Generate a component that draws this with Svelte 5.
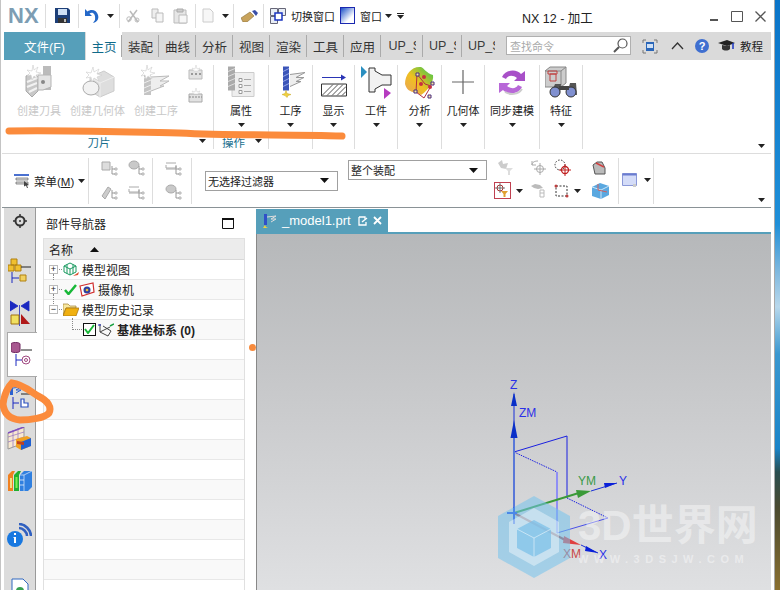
<script>
  const tabs = ["装配", "曲线", "分析", "视图", "渲染", "工具", "应用"];
  const emptyRows = Array(13).fill(0);
</script>

{#snippet caret()}
  <svg class="caret" width="7" height="4" viewBox="0 0 7 4"><path d="M0 0h7L3.5 4z" fill="#222" /></svg>
{/snippet}

{#snippet cutterIcon()}
  <svg width="32" height="34" viewBox="0 0 32 34">
    <path d="M3 11l7-3 5 4v14l-6 6-6-6z" fill="#c8c8c8" stroke="#aaa" />
    <path d="M4 17l10-4M4 22l10-4M6 27l8-4" stroke="#f2f2f2" stroke-width="2" />
    <path d="M20 1h8v24h-8z" fill="#bbb" />
    <path d="M15 10h13v12l-8 3h-5z" fill="#e4e4e4" stroke="#b5b5b5" />
    <circle cx="20" cy="17" r="2" fill="#888" />
    <path d="M10 0l1 5 4-3-2 5 5 1-5 2 2 4-4-3-2 4-1-5-4 1 3-3-3-3 5 1z" fill="#fff" stroke="#ccc" stroke-width=".6" />
  </svg>
{/snippet}

{#snippet blankIcon()}
  <svg width="36" height="34" viewBox="0 0 36 34">
    <path d="M10 12l14-6 10 6v14l-14 6-10-6z" fill="#dedede" stroke="#ccc" />
    <path d="M10 12l10 6 14-6M20 18v14" fill="none" stroke="#eee" />
    <ellipse cx="11" cy="23" rx="8" ry="7" fill="#f2f2f2" stroke="#aaa" />
    <path d="M13 2l1 5 5-3-2 5 5 1-5 2 2 4-5-3-2 4-1-5-5 1 3-3-3-3 5 1z" fill="#fff" stroke="#ccc" stroke-width=".6" />
  </svg>
{/snippet}

{#snippet operIcon()}
  <svg width="32" height="34" viewBox="0 0 32 34">
    <path d="M4 9h7v21H4z" fill="#c4c4c4" />
    <path d="M4 13l7-3M4 18l7-3M4 23l7-3M4 28l7-3" stroke="#eee" />
    <path d="M11 12l18-1-9 5 9 0-9 5 4 0-13 5" fill="#eee" stroke="#bbb" />
    <path d="M7 0l1 5 4-3-2 5 5 1-5 2 2 4-4-3-2 3-1-4-4 1 3-3-3-3 5 1z" fill="#fff" stroke="#ccc" stroke-width=".6" />
  </svg>
{/snippet}

{#snippet grayTree(variant = 0)}
  <svg width="17" height="17" viewBox="0 0 17 17">
    {#if variant === 0}
      <path d="M1 2h8v8H1z" fill="#ddd" stroke="#aaa" />
    {:else if variant === 1}
      <ellipse cx="6" cy="5" rx="5" ry="4" fill="#c9c9c9" stroke="#aaa" />
    {:else if variant === 2}
      <path d="M1 12l6-9 3 2-6 10z" fill="#ccc" stroke="#aaa" />
    {:else}
      <path d="M1 3h10M1 5v3h10V5M1 9h10" fill="none" stroke="#aaa" />
    {/if}
    <path d="M11 6v8h3M11 9h3" fill="none" stroke="#999" />
    <path d="M14 8h2v2h-2zM14 13h2v2h-2z" fill="#fff" stroke="#999" stroke-width=".7" />
  </svg>
{/snippet}

<div class="app">
  <div class="win">
    <header class="titlebar">
      <span class="logo">NX</span>
      <i class="sep s1"></i>
      <svg class="ic-save" width="15" height="15" viewBox="0 0 15 15">
        <path d="M0 0h13l2 2v13H0z" fill="#1d3f78" />
        <path d="M3 1h9v6H3z" fill="#cfe0f5" />
        <path d="M3 10h9v5H3z" fill="#333" /><path d="M9 11h2v3H9z" fill="#bbb" />
      </svg>
      <i class="sep s2"></i>
      <svg class="ic-undo" width="15" height="15" viewBox="0 0 15 15">
        <path d="M1 1v7h7L5.5 5.5C8 3.5 12 5 11 12l-2 3c5-1 6-5 5-8-1-5-7-6.5-10.5-3.5z" fill="#2468c8" />
      </svg>
      <span class="cw">{@render caret()}</span>
      <i class="sep s3"></i>
      <svg class="ic-g1" width="14" height="15" viewBox="0 0 14 15">
        <path d="M2 14L11 2M12 14L4 3" stroke="#bbb" stroke-width="1.5" />
        <circle cx="3" cy="11" r="2.2" fill="none" stroke="#bbb" /><circle cx="11" cy="12" r="2" fill="none" stroke="#bbb" />
      </svg>
      <svg class="ic-g2" width="13" height="15" viewBox="0 0 13 15">
        <path d="M1 1h6v9H1z" fill="#eee" stroke="#bbb" /><path d="M5 5h7v9H5z" fill="#f5f5f5" stroke="#bbb" />
      </svg>
      <svg class="ic-g3" width="15" height="16" viewBox="0 0 15 16">
        <path d="M1 2h12v13H1z" fill="#e6e6e6" stroke="#bbb" /><path d="M4 1h6v3H4z" fill="#ccc" stroke="#aaa" />
        <path d="M6 7h8v8H6z" fill="#f7f7f7" stroke="#bbb" />
      </svg>
      <i class="sep s4"></i>
      <svg class="ic-g4" width="12" height="15" viewBox="0 0 12 15"><path d="M1 1h7l3 3v10H1z" fill="#f7f7f7" stroke="#ccc" /></svg>
      <span class="cw2">{@render caret()}</span>
      <i class="sep s5"></i>
      <svg class="ic-eraser" width="17" height="12" viewBox="0 0 17 12">
        <path d="M0 8l9-6 4 4-7 6H2z" fill="#c8a35c" stroke="#8a6f3a" stroke-width=".6" />
        <path d="M11 1l3-1 3 3-2 3z" fill="#3a4fa8" />
      </svg>
      <i class="sep s6"></i>
      <svg class="ic-switch" width="16" height="16" viewBox="0 0 16 16">
        <path d="M.5.5h7v7h-7zM8.5.5h7v7h-7zM.5 8.5h7v7h-7z" fill="#e8edf5" stroke="#667" />
        <path d="M5 5h7v7H5z" fill="#fff" stroke="#1a35c0" stroke-width="1.5" />
      </svg>
      <span class="tb-text t1">切换窗口</span>
      <span class="ic-window"></span>
      <span class="tb-text t2">窗口</span>
      <span class="cw3">{@render caret()}</span>
      <svg class="ic-over" width="7" height="6" viewBox="0 0 7 6"><path d="M0 0h7v1H0zM0 2h7L3.5 6z" fill="#222" /></svg>
      <span class="title">NX 12 - 加工</span>
      <div class="winbtns">
        <svg width="9" height="9" viewBox="0 0 9 9"><path d="M0 7h8v2H0z" fill="#555" /></svg>
        <svg width="12" height="11" viewBox="0 0 12 11"><path d="M.5.5h11v10H.5z" fill="none" stroke="#555" /></svg>
        <svg width="11" height="11" viewBox="0 0 11 11"><path d="M.5.5l10 10m0-10l-10 10" stroke="#555" stroke-width="1.3" /></svg>
      </div>
    </header>

    <nav class="tabs">
      <span class="file">文件(F)</span>
      <span class="tab current">主页</span>
      {#each tabs as t}
        <span class="tab">{t}</span>
      {/each}
      <span class="tab up"><b>UP_S</b></span>
      <span class="tab up"><b>UP_S</b></span>
      <span class="tab up last"><b>UP_S</b></span>
      <div class="search">
        <span>查找命令</span>
        <svg width="15" height="15" viewBox="0 0 15 15">
          <circle cx="9.5" cy="5.5" r="4.5" fill="#fff" stroke="#555" stroke-width="1.2" />
          <path d="M6 9l-5 5" stroke="#555" stroke-width="2" />
        </svg>
      </div>
      <svg class="tabicon i1" width="16" height="15" viewBox="0 0 16 15">
        <path d="M1 4V1h3M12 1h3v3M15 11v3h-3M4 14H1v-3" fill="none" stroke="#777" />
        <path d="M4 3h8v9H4z" fill="#2a66b8" /><path d="M5 5h6v4H5z" fill="#cfe0f5" />
      </svg>
      <svg class="tabicon i2" width="13" height="8" viewBox="0 0 13 8"><path d="M1 7l5.5-6L12 7" fill="none" stroke="#333" stroke-width="1.3" /></svg>
      <span class="help">?</span>
      <svg class="tabicon i3" width="17" height="12" viewBox="0 0 17 12">
        <path d="M0 3l9-3 8 3-8 3z" fill="#222" /><path d="M4 5v4c2 2 6 2 8 0V5L9 6z" fill="#333" />
        <path d="M15 3v6" stroke="#1a35c0" stroke-width="1.5" />
      </svg>
      <span class="tut">教程</span>
    </nav>

    <section class="ribbon">
      <div class="group g-blade">
        <div class="items">
          <div class="btn off w-a">{@render cutterIcon()}<span>创建刀具</span></div>
          <div class="btn off w-b">{@render blankIcon()}<span>创建几何体</span></div>
          <div class="btn off w-a">{@render operIcon()}<span>创建工序</span></div>
          <div class="minis">
            <svg width="15" height="15" viewBox="0 0 15 15"><path d="M1 5h13v9H1z" fill="#e2e2e2" stroke="#bbb" /><path d="M3 8h2v2H3zM7 8h2v2H7zM11 8h2v2h-2z" fill="#999" /><path d="M8 0l1 4 3-1-2 3H6L4 3l3 1z" fill="#fff" stroke="#ccc" stroke-width=".5" /></svg>
            <svg width="15" height="16" viewBox="0 0 15 16"><path d="M1 7h13v8H1z" fill="#e2e2e2" stroke="#aaa" /><path d="M1 10h13" stroke="#888" stroke-dasharray="2 1" /><path d="M8 1l1 4 3-1-2 3H6L4 4l3 1z" fill="#fff" stroke="#ccc" stroke-width=".5" /></svg>
          </div>
        </div>
        <div class="foot"><span>刀片</span>{@render caret()}</div>
      </div>

      <div class="group g-op">
        <div class="items">
          <div class="btn">
            <svg width="29" height="31" viewBox="0 0 29 31">
              <path d="M5 6h22v24H5z" fill="#eee" stroke="#ccc" />
              <path d="M1 0h7v24H1z" fill="#aaa" /><path d="M1 5l7-3M1 10l7-3M1 15l7-3M1 20l7-3" stroke="#ddd" />
              <path d="M12 12h3v3h-3zM12 18h3v3h-3zM12 24h3v3h-3z" fill="#fff" stroke="#999" />
              <path d="M17 13h7M17 19h7M17 25h7" stroke="#aaa" />
            </svg>
            <span>属性</span>{@render caret()}
          </div>
        </div>
        <div class="foot"><span>操作</span>{@render caret()}</div>
      </div>

      <div class="group g-work">
        <div class="items">
          <div class="btn">
            <svg width="30" height="31" viewBox="0 0 30 31">
              <path d="M7 0h6v24H7z" fill="#3b55b8" /><path d="M7 5l6-3M7 10l6-3M7 15l6-3M7 20l6-3" stroke="#98a8e8" />
              <path d="M14 8l15-2-9 5 8 0-8 4 5 0-11 5" fill="#eee" stroke="#999" />
              <path d="M10 24l1 3 4 1-3 1-1 2-2-2-3-1 3-1z" fill="#f0d040" stroke="#c8a820" stroke-width=".5" />
            </svg>
            <span>工序</span>{@render caret()}
          </div>
        </div>
        <div class="foot"></div>
      </div>

      <div class="group g-show">
        <div class="items">
          <div class="btn">
            <svg width="26" height="31" viewBox="0 0 26 31">
              <path d="M1 11h21" stroke="#2a35b5" /><path d="M20 8l5 3-5 3z" fill="#2a35b5" />
              <path d="M.5 17.5h25v12H.5z" fill="#fff" stroke="#333" />
              <path d="M1 29l11-11M6 29l11-11M11 29l11-11M16 29l9-9M21 29l4-4" stroke="#555" />
            </svg>
            <span>显示</span>{@render caret()}
          </div>
        </div>
        <div class="foot"></div>
      </div>

      <div class="group g-part">
        <div class="items">
          <div class="btn">
            <svg width="33" height="34" viewBox="0 0 33 34">
              <path d="M1 1l6 6-6 6z" fill="#2b8fc0" /><path d="M24 23l7 5-7 6z" fill="#b63cc0" />
              <path d="M9 3h6v3l7 4h9v10h-9l-7 4v3H9z" fill="#f2f2f2" stroke="#333" />
            </svg>
            <span>工件</span>{@render caret()}
          </div>
        </div>
        <div class="foot"></div>
      </div>

      <div class="group g-ana">
        <div class="items">
          <div class="btn">
            <svg width="31" height="32" viewBox="0 0 31 32">
              <defs><linearGradient id="heat" x1="0" y1="1" x2="1" y2="0"><stop offset="0" stop-color="#e8a060" /><stop offset=".45" stop-color="#f0c020" /><stop offset="1" stop-color="#30c850" /></linearGradient></defs>
              <path d="M1 18C1 8 8 0 17 1c4 2 5 6 12 8 1 6-4 15-12 20C11 25 4 28 1 18z" fill="url(#heat)" />
              <path d="M13 8l-1 18 8 6 7-12-6-2z" fill="none" stroke="#b03040" />
              <path d="M12 7h3v3h-3zM10 24h3v3h-3zM27 16h3v3h-3zM24 29h3v3h-3z" fill="#f5e8a0" stroke="#4a2a80" />
              <circle cx="20" cy="11" r="2" fill="#c83040" /><circle cx="17" cy="18" r="2" fill="#c83040" /><circle cx="26" cy="21" r="2" fill="#c83040" />
            </svg>
            <span>分析</span>{@render caret()}
          </div>
        </div>
        <div class="foot"></div>
      </div>

      <div class="group g-geo">
        <div class="items">
          <div class="btn">
            <svg width="24" height="34" viewBox="0 0 24 34"><path d="M12 5v24M1 17h22" stroke="#666" stroke-width="1.2" /></svg>
            <span>几何体</span>{@render caret()}
          </div>
        </div>
        <div class="foot"></div>
      </div>

      <div class="group g-sync">
        <div class="items">
          <div class="btn">
            <svg width="30" height="30" viewBox="0 0 30 30">
              <path d="M5 10C9 2 20 2 24 7l4-3v10H17l3-3c-4-3-9-3-11 1z" fill="#a850c8" />
              <path d="M25 20c-4 8-15 8-19 3l-4 3V16h11l-3 3c4 3 9 3 11-1z" fill="#b868d8" />
              <path d="M8 25c5 3 13 3 17-3" fill="none" stroke="#ccc" stroke-width="2" />
            </svg>
            <span>同步建模</span>{@render caret()}
          </div>
        </div>
        <div class="foot"></div>
      </div>

      <div class="group g-feat">
        <div class="items">
          <div class="btn">
            <svg width="33" height="32" viewBox="0 0 33 32">
              <path d="M0 5l5-4h16v16l-5 4H0z" fill="#ccc" stroke="#888" />
              <path d="M0 5h16v16M16 5l5-4" fill="none" stroke="#888" />
              <path d="M3 5h9v3H3zM5 8h6v7H5z" fill="none" stroke="#c04040" />
              <path d="M6 28l4-10h6l-1 10z" fill="#555" /><path d="M22 28l3-11 6 0 1 12z" fill="#555" />
              <circle cx="10" cy="26" r="5" fill="#8090d0" stroke="#333" /><circle cx="26" cy="26" r="5" fill="#8090d0" stroke="#333" />
              <path d="M14 20h10v4H14z" fill="#444" />
            </svg>
            <span>特征</span>{@render caret()}
          </div>
        </div>
        <div class="foot"></div>
      </div>
      <span class="more">{@render caret()}</span>
    </section>

    <section class="toolbar">
      <div class="menu">
        <svg width="16" height="14" viewBox="0 0 16 14">
          <path d="M0 1h15" stroke="#4a70d0" stroke-width="2" /><path d="M2 4h12v2H2zM2 8h12v2H2z" fill="#ddd" stroke="#666" stroke-width=".7" />
          <path d="M10 7l5 4-2 .5 1 2.5-1 0-1-2.5-2 1z" fill="#444" />
        </svg>
        <span>菜单(<u>M</u>)</span>
        {@render caret()}
      </div>
      <i class="tsep"></i>
      <div class="gridicons">
        {@render grayTree(0)}{@render grayTree(1)}{@render grayTree(2)}{@render grayTree(3)}
      </div>
      <i class="tsep"></i>
      <div class="gridicons single">{@render grayTree(3)}{@render grayTree(1)}</div>
      <i class="tsep"></i>
      <div class="select filter"><span>无选择过滤器</span><svg width="9" height="5" viewBox="0 0 9 5"><path d="M0 0h9L4.5 5z" fill="#111" /></svg></div>
      <div class="select whole"><span>整个装配</span><svg width="9" height="5" viewBox="0 0 9 5"><path d="M0 0h9L4.5 5z" fill="#111" /></svg></div>
      <div class="sel-icons">
        <svg class="funnel" width="17" height="15" viewBox="0 0 17 15"><path d="M1 3l4-3 1 4 5-1-2 6-5-1z" fill="#ccc" /><path d="M8 8h8l-3 3v4h-2v-4z" fill="#ddd" /></svg>
        <svg width="17" height="17" viewBox="0 0 17 17"><path d="M2 6c0-3 3-4 6-4M2 2v4h4" fill="none" stroke="#aaa" /><circle cx="10" cy="10" r="3.5" fill="none" stroke="#aaa" /><path d="M10 4v12M4 10h12" stroke="#aaa" /></svg>
        <svg width="17" height="17" viewBox="0 0 17 17"><circle cx="6" cy="6" r="5" fill="none" stroke="#333" stroke-dasharray="1.5 1.5" /><circle cx="11" cy="11" r="3.5" fill="none" stroke="#c02020" stroke-width="1.3" /><path d="M11 5v12M5 11h12" stroke="#c02020" /></svg>
        <svg width="17" height="15" viewBox="0 0 17 15"><path d="M1 5l4-3 5 0 3 6v6H3z" fill="#bbb" stroke="#555" /><path d="M4 3l8 4" stroke="#d04040" stroke-width="1.5" /></svg>
        <div class="with-caret">
          <span class="redbox">
            <svg width="14" height="14" viewBox="0 0 14 14">
              <circle cx="5" cy="5" r="3" fill="none" stroke="#a33" /><path d="M5 0v10M0 5h10" stroke="#555" stroke-width=".8" />
              <path d="M6 8h7l-2.5 3v3h-2v-3z" fill="#e0a030" />
            </svg>
          </span>
          {@render caret()}
        </div>
        <svg width="17" height="15" viewBox="0 0 17 15"><path d="M1 3l4-2 5 1 3 3-5 1-4-1z" fill="#bbb" /><path d="M10 7h4v7h-4zM10 10h4" fill="none" stroke="#bbb" /></svg>
        <div class="with-caret">
          <svg width="15" height="14" viewBox="0 0 15 14"><path d="M2 2h11v10H2z" fill="none" stroke="#333" stroke-dasharray="2 1.5" /><circle cx="2" cy="2" r="1.5" fill="#c04040" /><circle cx="13" cy="12" r="1.5" fill="#c04040" /></svg>
          {@render caret()}
        </div>
        <svg width="17" height="16" viewBox="0 0 17 16"><path d="M0 4l8-4 9 3v9l-8 4-9-3z" fill="#5aa8e0" /><path d="M0 4l9 3 8-4M9 7v9" fill="none" stroke="#cbe4f8" /><path d="M6 1v6l9 2" fill="none" stroke="#d06060" /></svg>
      </div>
      <i class="tsep"></i>
      <svg class="dlg" width="15" height="15" viewBox="0 0 15 15"><path d="M.5.5h14v12H.5z" fill="#d4dcf8" stroke="#8a98d8" /><path d="M.5.5h14v2H.5z" fill="#6a7cd0" /><path d="M11 11h3v3h-3z" fill="#ccc" /></svg>
      <span class="dlg-caret">{@render caret()}</span>
      <i class="tsep s-b"></i>
      <span class="more">{@render caret()}</span>
    </section>

    <section class="body">
      <aside class="rail">
        <div class="rail-top">
          <svg width="14" height="14" viewBox="0 0 14 14"><circle cx="7" cy="7" r="4.5" fill="none" stroke="#333" stroke-width="2" /><circle cx="7" cy="7" r="1" fill="#333" /><path d="M7 0v2M7 12v2M0 7h2M12 7h2" stroke="#333" stroke-width="1.5" /></svg>
        </div>
        <div class="rail-btn b1">
          <svg width="24" height="25" viewBox="0 0 24 25">
            <path d="M3 1h6v6H3zM0 7h6v6H0zM7 7h6v6H7z" fill="#f0c030" stroke="#b08010" />
            <path d="M13 9h10" stroke="#222" /><path d="M4 14v11M4 20h7" stroke="#1a28c0" />
            <path d="M12 17h6v6h-6z" fill="#f0d060" stroke="#b08010" />
          </svg>
        </div>
        <div class="rail-btn b2">
          <svg width="20" height="26" viewBox="0 0 20 26">
            <path d="M0 1l8 5-8 5zM19 1l-8 5 8 5zM9.5 5v21" fill="#1a28c0" stroke="#1a28c0" stroke-width=".8" />
            <path d="M1 15h8v9H1z" fill="#f0e060" stroke="#a07010" /><path d="M11 24l9 0-9-10z" fill="#b01818" />
          </svg>
        </div>
        <div class="rail-btn active">
          <svg width="22" height="25" viewBox="0 0 22 25">
            <path d="M0 2c0-2 9-2 9 0v7c0 2-9 2-9 0z" fill="#a85890" stroke="#702860" /><path d="M10 8h11" stroke="#222" />
            <path d="M5 12v12M5 18h6" stroke="#1a28c0" /><circle cx="15" cy="18" r="4" fill="none" stroke="#a04880" /><circle cx="15" cy="18" r="1.5" fill="none" stroke="#a04880" />
          </svg>
        </div>
        <div class="rail-btn b4">
          <svg width="22" height="25" viewBox="0 0 22 25">
            <path d="M1 0h3v9H1z" fill="#2a60d0" /><path d="M4 2l8-1-5 3 5 0-5 3" fill="none" stroke="#2a60d0" /><path d="M12 8h10" stroke="#222" />
            <path d="M4 11v12M4 17h6" stroke="#1a28c0" /><path d="M12 13h3v4h4v4h-7z" fill="#fff" stroke="#2a50c0" stroke-width="1.2" />
          </svg>
        </div>
        <div class="rail-btn b5">
          <svg width="25" height="24" viewBox="0 0 25 24">
            <path d="M1 6l16-6v16L1 22z" fill="#f8e8d0" stroke="#999" /><path d="M1 10l16-5M1 15l16-5M6 3v17M11 1v17" stroke="#9070c0" stroke-width=".7" /><path d="M1 6l16-6" stroke="#8050c0" stroke-width="1.5" />
            <path d="M9 12l11-3 4 2v8l-10 4-5-3z" fill="#f0a020" /><path d="M14 15l10-4v8l-10 4z" fill="#2060d0" /><path d="M10 14l7 1v3l-7-1z" fill="#c04020" />
          </svg>
        </div>
        <div class="rail-btn b6">
          <svg width="24" height="22" viewBox="0 0 24 22">
            <path d="M0 5l4-4h3l-2 4v16H0z" fill="#f08020" /><path d="M2 8h2v10H2z" fill="#f0e080" />
            <path d="M6 5l4-4h3l-2 4v16H6z" fill="#20b030" /><path d="M7.5 7h2v11h-2z" fill="#80f050" />
            <path d="M12 5l4-4h8v16l-4 4h-8z" fill="#3080e0" /><path d="M12 5h4v16M16 5l8-4" fill="none" stroke="#fff" stroke-width=".6" />
            <path d="M12 10h4M12 15h4" stroke="#fff" stroke-width=".7" />
          </svg>
        </div>
        <div class="rail-btn b7">
          <svg width="25" height="24" viewBox="0 0 25 24">
            <path d="M12 1c6 0 12 6 12 12M12 5c4 0 8 4 8 8" fill="none" stroke="#3060c0" stroke-width="2.5" />
            <circle cx="8" cy="16" r="8" fill="#1878e0" /><path d="M7 10h2v2H7zM6.5 14H9v6H7v-5h-.5z" fill="#fff" />
          </svg>
        </div>
        <div class="rail-btn b8">
          <svg width="18" height="20" viewBox="0 0 18 20">
            <path d="M1 1h11l5 5v14H1z" fill="#fff" stroke="#3068c0" /><circle cx="9" cy="13" r="4" fill="#38a050" />
          </svg>
        </div>
      </aside>

      <div class="navigator">
        <div class="nav-title">
          <span>部件导航器</span>
          <svg width="12" height="11" viewBox="0 0 12 11"><path d="M.5 1h11v9.5H.5z" fill="#fff" stroke="#111" /><path d="M0 1h12" stroke="#111" stroke-width="2" /></svg>
        </div>
        <div class="tree">
          <div class="tree-head"><span>名称</span><svg width="9" height="5" viewBox="0 0 9 5"><path d="M4.5 0L9 5H0z" fill="#111" /></svg></div>
          <div class="row">
            <span class="exp">+</span><i class="dots d1"></i>
            <svg class="node" width="16" height="15" viewBox="0 0 16 15"><path d="M7 1l6 3v6l-6 3-6-3V4zM1 4l6 3 6-3M7 7v6M4 2.5v9M10 2.5v9" fill="none" stroke="#1a9a60" /><path d="M10 14l6-4-1 3z" fill="#e05030" /></svg>
            <span class="lbl">模型视图</span>
          </div>
          <div class="row">
            <span class="exp">+</span><i class="dots d2"></i>
            <svg class="check" width="13" height="11" viewBox="0 0 13 11"><path d="M1 6l3.5 4L12 1" fill="none" stroke="#18b838" stroke-width="2.5" /></svg>
            <svg class="node" width="16" height="15" viewBox="0 0 16 15"><path d="M1 4l13-3 1 9-12 4z" fill="#fff" stroke="#d03030" stroke-width="1.2" /><circle cx="8" cy="8" r="3.5" fill="#3040a0" /><circle cx="8" cy="8" r="1.3" fill="#f0c030" /></svg>
            <span class="lbl">摄像机</span>
          </div>
          <div class="row">
            <span class="exp">−</span><i class="dots d3"></i>
            <svg class="node" width="16" height="13" viewBox="0 0 16 13"><path d="M0 1h5l2 2h6v2H3L0 12z" fill="#f8e8a0" stroke="#a08030" stroke-width=".7" /><path d="M3 5h13l-3 8H0z" fill="#f0b010" stroke="#a07010" stroke-width=".7" /></svg>
            <span class="lbl">模型历史记录</span>
          </div>
          <div class="row child">
            <i class="elbow"></i>
            <span class="box"><svg width="11" height="10" viewBox="0 0 11 10"><path d="M1 5l3 4 6-8" fill="none" stroke="#18b838" stroke-width="2" /></svg></span>
            <svg class="node" width="16" height="14" viewBox="0 0 16 14"><path d="M2 1v8l8 4M2 9l10-5M5 3l8 5-3 5" fill="none" stroke="#444" /><path d="M0 2h3" stroke="#1a28c0" /><path d="M12 3l4-2" stroke="#18a040" stroke-width="1.5" /></svg>
            <strong class="lbl">基准坐标系 (0)</strong>
          </div>
          {#each emptyRows as _}
            <div class="row"></div>
          {/each}
        </div>
        <i class="grip"></i>
      </div>

      <div class="graphics">
        <div class="doc-tabs">
          <div class="doc-tab">
            <svg width="15" height="14" viewBox="0 0 15 14"><path d="M2 0h3v11H2z" fill="#3050c8" /><path d="M5 3l9-1-5 3 5 0-5 3" fill="none" stroke="#ddd" /><path d="M3 11l1 2 2 1-3 0-2 0z" fill="#f0d040" /></svg>
            <span>_model1.prt</span>
            <svg class="pop" width="10" height="10" viewBox="0 0 10 10"><path d="M1 1h6v2M1 1v8h7V6" fill="none" stroke="#fff" stroke-width="1.3" /><path d="M4 6l5-4" stroke="#fff" stroke-width="1.5" /></svg>
            <svg width="9" height="9" viewBox="0 0 9 9"><path d="M1 1l7 7m0-7L1 8" stroke="#fff" stroke-width="1.8" /></svg>
          </div>
        </div>
        <div class="viewport">
          <svg class="csys" width="160" height="190" viewBox="470 375 160 190">
            <path d="M513 450l53-16v62" fill="none" stroke="#1a20e0" />
            <path d="M513 450l43 20" fill="none" stroke="#1a20e0" stroke-dasharray="1.5 1" />
            <path d="M556 470v61" stroke="#8f8ff5" stroke-width="2" />
            <path d="M566 496l41 20" stroke="#1a20e0" stroke-dasharray="1.5 1" />
            <path d="M607 516l-51 15" stroke="#4a50e8" />
            <path d="M513 511V392" stroke="#1a30d8" />
            <path d="M513 511V436" stroke="#5a78d8" stroke-width="2" />
            <path d="M513 390l-3 14h6zM513 418l-3.5 18h7z" fill="#0a30c8" />
            <path d="M513 511l68-21" stroke="#3a9a38" stroke-width="2" />
            <path d="M590 489l-15-1 2 8z" fill="#3a9a38" />
            <path d="M590 489l26-8" stroke="#1a30d8" />
            <path d="M616 481l-13 0 1 5z" fill="#0a20d8" />
            <path d="M513 511l53 28" stroke="#a05050" stroke-width="2" />
            <path d="M580 543l-17-9-1 7z" fill="#e04040" />
            <path d="M580 543l17 8" stroke="#1a30d8" />
            <path d="M597 551l-12-7-1 5z" fill="#0a20d8" />
            <path d="M506 511h10M513 505v17" stroke="#1a40e0" stroke-width="2" />
            <text x="509" y="387" class="l blue">Z</text>
            <text x="518" y="415" class="l blue">ZM</text>
            <text x="577" y="483" class="l green">YM</text>
            <text x="618" y="483" class="l blue">Y</text>
            <text x="562" y="556" class="l red">XM</text>
            <text x="598" y="557" class="l blue">X</text>
          </svg>
        </div>
      </div>
    </section>
  </div>
  <div class="photo"></div>

  <svg class="marks" width="780" height="590" viewBox="0 0 780 590">
    <path d="M9 131c60-1 110 1 170 2 60 3 110 1 163 3" fill="none" stroke="#fb8b3c" stroke-width="7" stroke-linecap="round" />
    <path d="M12 383C22 384 30 391 38 396 48 401 52 407 49 413 45 418 30 420 20 420 10 419 4 414 3 404 4 396 7 388 12 383z" fill="none" stroke="#fb8b3c" stroke-width="7" />
  </svg>
  <div class="watermark">
    <svg width="74" height="84" viewBox="0 0 74 84">
      <path d="M37 1l36 20v42L37 83 1 63V21z" fill="#74c2ec" fill-opacity=".55" />
      <path d="M37 13l25 14v30L37 71 12 57V27z" fill="#fff" fill-opacity=".4" />
      <path d="M37 25l17 9v19l-17 9-17-9V34z" fill="#7cc0e8" fill-opacity=".75" />
      <path d="M20 34l17 9 17-9M37 43v19" fill="none" stroke="#fff" stroke-opacity=".5" />
    </svg>
    <div class="wm-text">
      <span class="big">3D世界网</span>
      <span class="url">WWW.3DSJW.COM</span>
    </div>
  </div>
</div>

<style>
  :global(body) {
    margin: 0;
    background: #fff;
  }
  .app {
    position: relative;
    display: flex;
    width: 780px;
    height: 590px;
    overflow: hidden;
    font-family: "Liberation Sans", "Noto Sans CJK SC", sans-serif;
    font-size: 12px;
    color: #222;
    background: #fff;
  }
  .win {
    width: 775px;
    padding-left: 1px;
    flex: none;
    border-left: 1px solid #c4c4c4;
    border-right: 1px solid #a8a8a8;
    box-sizing: border-box;
    display: flex;
    flex-direction: column;
  }
  .photo {
    flex: 1;
    background: linear-gradient(180deg, #0a74c8 0, #1f8fd8 38%, #7fb8de 46%, #b8d8ec 52%, #3b98d0 60%, #1a84c8 76%, #2a4f50 80%, #4a4a30 86%, #8a7030 100%);
  }

  /* title bar */
  .titlebar {
    height: 33px;
    flex: none;
    display: flex;
    align-items: center;
    position: relative;
    margin-top: -1px;
  }
  .logo {
    width: 38px;
    margin-left: 6px;
    font-size: 22px;
    font-weight: 700;
    color: #7d9db3;
  }
  .sep {
    width: 1px;
    height: 24px;
    background: #ddd;
    flex: none;
  }
  .ic-save { margin-left: 9px; }
  .s1 { margin-left: -1px; }
  .s2 { margin-left: 8px; }
  .ic-undo { margin-left: 5px; }
  .cw { margin-left: 8px; display: flex; }
  .s3 { margin-left: 5px; }
  .ic-g1 { margin-left: 6px; }
  .ic-g2 { margin-left: 11px; }
  .ic-g3 { margin-left: 9px; }
  .s4 { margin-left: 7px; }
  .ic-g4 { margin-left: 6px; }
  .cw2 { margin-left: 8px; display: flex; }
  .s5 { margin-left: 4px; }
  .ic-eraser { margin-left: 7px; }
  .s6 { margin-left: 5px; }
  .ic-switch { margin-left: 6px; }
  .tb-text { font-size: 11px; white-space: nowrap; }
  .t1 { margin-left: 5px; width: 49px; }
  .ic-window {
    width: 13px;
    height: 15px;
    border: 1px solid #1a28b0;
    background: linear-gradient(135deg, #1a50c8, #fff 70%);
    flex: none;
  }
  .t2 { margin-left: 5px; width: 24px; }
  .cw3 { margin-left: 1px; display: flex; }
  .ic-over { margin-left: 5px; }
  .title {
    position: absolute;
    left: 520px;
    top: 9px;
    font-size: 12.5px;
    white-space: nowrap;
  }
  .winbtns {
    margin-left: auto;
    margin-right: 8px;
    display: flex;
    align-items: center;
    gap: 12px;
    margin-top: 2px;
  }

  /* tabs */
  .tabs {
    height: 28px;
    flex: none;
    margin: 0 3px 0 2px;
    background: #dadada;
    display: flex;
    align-items: center;
    position: relative;
    font-size: 12.5px;
  }
  .file {
    width: 81px;
    height: 100%;
    background: #569fba;
    color: #fff;
    display: flex;
    align-items: center;
    justify-content: center;
    flex: none;
  }
  .tab {
    width: 37px;
    height: 100%;
    flex: none;
    display: flex;
    align-items: center;
    justify-content: center;
    box-sizing: border-box;
    position: relative;
    overflow: hidden;
    color: #333;
  }
  .tab::after {
    content: "";
    position: absolute;
    right: 0;
    top: 3px;
    bottom: 3px;
    width: 1px;
    background: #aaa;
  }
  .tab.current {
    margin-left: 1px;
    width: 36px;
    background: #fff;
    color: #0f6a8a;
  }
  .tab.up { width: 39px; }
  .tab.up:nth-of-type(10) { width: 42px; }
  .tab.last::after { display: none; }
  .tab b {
    font-weight: 400;
    width: 27px;
    overflow: hidden;
    white-space: nowrap;
    color: #3a3a3a;
  }
  .search {
    position: absolute;
    left: 502px;
    top: 4px;
    width: 125px;
    height: 19px;
    box-sizing: border-box;
    background: #fff;
    border: 1px solid #b0b0b0;
    display: flex;
    align-items: center;
    justify-content: space-between;
    padding: 0 2px 0 3px;
    font-size: 11px;
    color: #aaa;
  }
  .tabicon { position: absolute; }
  .i1 { left: 638px; top: 7px; }
  .i2 { left: 667px; top: 10px; }
  .i3 { left: 714px; top: 8px; }
  .help {
    position: absolute;
    left: 691px;
    top: 7px;
    width: 14px;
    height: 14px;
    border-radius: 50%;
    background: #3f6fd0;
    color: #fff;
    font-weight: 700;
    font-size: 11px;
    line-height: 14px;
    text-align: center;
  }
  .tut {
    position: absolute;
    left: 736px;
    top: 6px;
    font-size: 11.5px;
  }

  /* ribbon */
  .ribbon {
    height: 94px;
    flex: none;
    display: flex;
    box-sizing: border-box;
    padding: 5px 3px 4px 2px;
    margin-right: 3px;
    border-bottom: 1px solid #ddd;
    position: relative;
  }
  .group {
    flex: none;
    display: flex;
    flex-direction: column;
    border-right: 1px solid #ddd;
    box-sizing: border-box;
    position: relative;
  }
  .g-blade { width: 210px; }
  .g-op { width: 55px; }
  .g-work { width: 44px; }
  .g-show { width: 42px; }
  .g-part { width: 43px; }
  .g-ana { width: 44px; }
  .g-geo { width: 43px; }
  .g-sync { width: 55px; }
  .g-feat { width: 43px; }
  .items {
    flex: 1;
    display: flex;
    justify-content: center;
  }
  .g-blade .items {
    justify-content: flex-start;
    padding-left: 13px;
  }
  .btn {
    display: flex;
    flex-direction: column;
    align-items: center;
    height: 68px;
    font-size: 11px;
    white-space: nowrap;
    position: relative;
  }
  .btn svg:first-child { height: 34px; }
  .btn span { margin-top: 4px; line-height: 16px; }
  .btn .caret { margin-top: 4px; height: 4px; }
  .btn.off { color: #c8c8c8; }
  .w-a { width: 44px; margin-right: 9px; }
  .w-b { width: 55px; margin-right: 9px; }
  .minis {
    display: flex;
    flex-direction: column;
    gap: 7px;
    margin-left: 1px;
  }
  .foot {
    height: 16px;
    padding-top: 1px;
    box-sizing: border-box;
    display: flex;
    align-items: center;
    justify-content: center;
    font-size: 11.5px;
    color: #1b6f8e;
    position: relative;
  }
  .foot .caret { position: absolute; right: 7px; top: 6px; }
  .g-blade .foot span { margin-right: 19px; }
  .g-op .foot { justify-content: flex-start; padding-left: 8px; }
  .g-op .foot .caret { right: 6px; }
  .more {
    position: absolute;
    right: 6px;
    bottom: 5px;
    display: flex;
  }

  /* toolbar */
  .toolbar {
    height: 54px;
    flex: none;
    margin-right: 3px;
    display: flex;
    align-items: center;
    box-sizing: border-box;
    border-bottom: 1px solid #8a9296;
    position: relative;
  }
  .menu {
    display: flex;
    align-items: center;
    margin-left: 12px;
    width: 74px;
    gap: 4px;
    flex: none;
    font-size: 11.5px;
  }
  .tsep {
    width: 1px;
    height: 46px;
    background: #ddd;
    flex: none;
  }
  .gridicons {
    display: grid;
    grid-template-columns: 17px 17px;
    column-gap: 10px;
    row-gap: 7px;
    margin: 0 7px 0 12px;
    flex: none;
  }
  .gridicons.single {
    grid-template-columns: 17px;
    margin: 0 9px 0 12px;
  }
  .select {
    box-sizing: border-box;
    border: 1px solid #a0a0a0;
    background: #fff;
    display: flex;
    align-items: center;
    justify-content: space-between;
    padding: 0 8px 0 2px;
    font-size: 11px;
    flex: none;
  }
  .filter {
    width: 133px;
    height: 20px;
    margin: 0 10px 0 13px;
  }
  .whole {
    width: 139px;
    height: 20px;
    align-self: flex-start;
    margin-top: 6px;
  }
  .sel-icons {
    display: grid;
    grid-template-columns: 36px 24px 38px 17px;
    grid-auto-rows: 23px;
    justify-items: start;
    align-items: center;
    margin: -3px 9px 0 7px;
    flex: none;
  }
  .funnel { margin-left: 3px; }
  .with-caret { display: flex; align-items: center; gap: 5px; }
  .redbox {
    border: 1px solid #c04050;
    width: 15px;
    height: 15px;
    display: flex;
    flex: none;
  }
  .dlg { margin-left: 3px; }
  .dlg-caret { display: flex; margin-left: 7px; margin-top: -2px; }
  .s-b { margin-left: 2px; }

  /* body */
  .body {
    flex: 1;
    display: flex;
    min-height: 0;
  }
  .rail {
    width: 32px;
    margin-left: 2px;
    flex: none;
    background: #dcdcdc;
    border-right: 1px solid #9a9a9a;
    box-sizing: border-box;
    display: flex;
    flex-direction: column;
    align-items: center;
  }
  .rail-top {
    height: 26px;
    width: 100%;
    flex: none;
    display: flex;
    align-items: center;
    justify-content: center;
  }
  .rail-btn {
    display: flex;
    justify-content: center;
    align-items: center;
    width: 100%;
    flex: none;
  }
  .b1 { margin-top: 13px; height: 46px; }
  .b2 { height: 39px; }
  .active {
    height: 45px;
    background: #fff;
    border: 1px solid #aaa;
    border-right: none;
    box-sizing: border-box;
    width: 30px;
    margin-left: 3px;
    margin-right: -1px;
    z-index: 1;
  }
  .b4 { height: 42px; }
  .b5 { height: 40px; }
  .b6 { height: 44px; }
  .b7 { height: 64px; }
  .b8 { height: 20px; margin-top: 11px; }

  .navigator {
    width: 220px;
    flex: none;
    position: relative;
    box-sizing: border-box;
    padding-left: 7px;
  }
  .nav-title {
    height: 31px;
    display: flex;
    align-items: center;
    justify-content: space-between;
    padding: 0 10px 0 3px;
    width: 201px;
    box-sizing: border-box;
    margin-right: 0;
  }
  .tree {
    width: 202px;
    box-sizing: border-box;
    border: 1px solid #e0e0e0;
    border-bottom: none;
    margin-top: -1px;
  }
  .tree-head {
    height: 20px;
    background: #ececec;
    display: flex;
    align-items: center;
    gap: 17px;
    padding-left: 5px;
    border-bottom: 1px solid #d8d8d8;
  }
  .row {
    height: 20px;
    box-sizing: border-box;
    border-bottom: 1px solid #e8e8e8;
    display: flex;
    align-items: center;
    position: relative;
    padding-left: 5px;
    white-space: nowrap;
  }
  .row:nth-child(odd) { background: #f9f9f9; }
  .exp {
    width: 7px;
    height: 7px;
    border: 1px solid #bbb;
    background: #fff;
    font-size: 9px;
    line-height: 7px;
    text-align: center;
    flex: none;
    z-index: 1;
  }
  .dots {
    width: 3px;
    border-top: 1px dotted #888;
    margin: 0 1px;
    flex: none;
  }
  .d1::after, .d2::after {
    content: "";
    position: absolute;
    left: 9px;
    top: 14px;
    height: 12px;
    border-left: 1px dotted #888;
  }
  .node { flex: none; }
  .lbl { margin-left: 3px; }
  .check { margin: 0 2px 0 1px; flex: none; }
  .child { padding-left: 27px; }
  .elbow {
    position: absolute;
    left: 28px;
    top: -2px;
    width: 9px;
    height: 11px;
    border-left: 1px dotted #888;
    border-bottom: 1px dotted #888;
  }
  .box {
    margin-left: 12px;
    width: 11px;
    height: 11px;
    border: 1px solid #111;
    display: flex;
    flex: none;
    margin-right: 2px;
    background: #fff;
  }
  .child .lbl { font-weight: 700; }
  .grip {
    position: absolute;
    right: 0;
    top: 136px;
    width: 7px;
    height: 7px;
    border-radius: 50%;
    background: #f78a3c;
  }

  .graphics {
    flex: 1;
    min-width: 0;
    display: flex;
    flex-direction: column;
    margin-right: 3px;
    position: relative;
  }
  .doc-tabs {
    height: 23px;
    flex: none;
    border-bottom: 2px solid #569fba;
    display: flex;
    padding-top: 1px;
  }
  .doc-tab {
    width: 132px;
    background: #569fba;
    color: #fff;
    display: flex;
    align-items: center;
    gap: 5px;
    padding-left: 6px;
    box-sizing: border-box;
    font-size: 13px;
  }
  .pop { margin-left: 2px; }
  .viewport {
    flex: 1;
    background: linear-gradient(180deg, #b6b8ba 0, #c6c7c9 40%, #dfe0e2 100%);
    position: relative;
    border-left: 1px solid #888;
    overflow: hidden;
  }
  .csys {
    position: absolute;
    left: 214px;
    top: 143px;
  }
  .l { font-size: 12px; font-family: "Liberation Sans", sans-serif; }
  .blue { fill: #2a30e8; }
  .green { fill: #3a9a48; }
  .red { fill: #c84848; }

  /* overlays */
  .marks {
    position: absolute;
    left: 0;
    top: 0;
    pointer-events: none;
  }
  .watermark {
    position: absolute;
    left: 497px;
    top: 495px;
    display: flex;
    gap: 7px;
    pointer-events: none;
  }
  .wm-text {
    display: flex;
    flex-direction: column;
    color: rgba(255, 255, 255, 0.42);
  }
  .big {
    font-size: 42px;
    line-height: 46px;
    font-weight: 700;
    margin-top: 8px;
    white-space: nowrap;
  }
  .url {
    font-size: 11px;
    line-height: 12px;
    letter-spacing: 5.5px;
    margin-top: 4px;
    font-weight: 700;
    white-space: nowrap;
  }
</style>
